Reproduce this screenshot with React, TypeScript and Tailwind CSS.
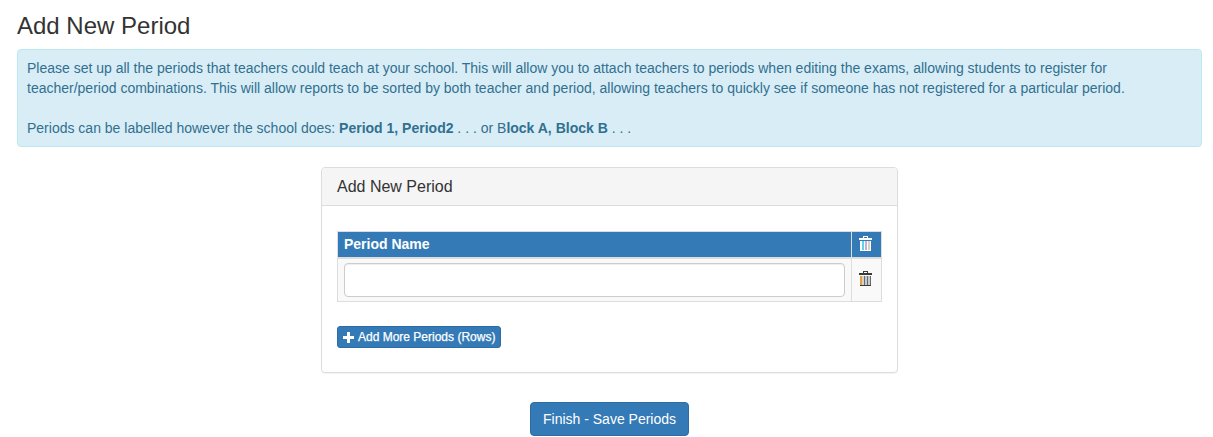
// Trash glyph on a 13x15 grid, bars tinted like the subpixel fringes in the reference
function TrashIcon({ tone }: { tone: 'light' | 'dark' }) {
  const ink = tone === 'light' ? '#ffffff' : '#3a3a3a';
  const bars =
    tone === 'light'
      ? [
          { x: 3, fill: '#5fd2ee' },
          { x: 6, fill: '#c2aee4' },
          { x: 9, fill: '#e2d0b6' },
        ]
      : [
          { x: 3, fill: '#e0d2b4' },
          { x: 6, fill: '#b4cde2' },
          { x: 9, fill: '#cdc8c0' },
        ];

  return (
    <svg viewBox="0 0 13 15" shapeRendering="crispEdges" className="h-[15px] w-[13px]" aria-hidden="true">
      <path fill={ink} d="M4 0h5v2h4v2H0V2h4zM5 1v1h3V1z" fillRule="evenodd" />
      <rect x="1" y="5" width="11" height="10" fill={tone === 'light' ? ink : '#6a6a6a'} />
      {tone === 'dark' && <rect x="1" y="14" width="11" height="1" fill={ink} />}
      {tone === 'dark' && <rect x="1" y="5" width="2" height="9" fill="#d9a050" />}
      {bars.map((bar) => (
        <rect key={bar.x} x={bar.x} y="5" width="2" height="9" fill={bar.fill} />
      ))}
    </svg>
  );
}

function PlusIcon() {
  return (
    <svg viewBox="0 0 11 11" className="h-[11px] w-[11px] shrink-0" fill="currentColor" aria-hidden="true">
      <path d="M4 0h3v4h4v3H7v4H4V7H0V4h4z" />
    </svg>
  );
}

export default function App() {
  return (
    <div className="min-h-[437px] overflow-hidden bg-white pl-[17px] pr-[11px] font-['Liberation_Sans',Arial,sans-serif] text-[14px] leading-[20px] text-[#333]">
      <h1 className="pt-[12px] text-[24px] leading-[27px] font-normal">Add New Period</h1>

      <div className="mt-[10px] h-[98px] rounded-[4px] border border-[#bce8f1] bg-[#d9edf7] pl-[9px] pr-[9px] pt-[8px] text-[#31708f]">
        <p>
          Please set up all the periods that teachers could teach at your school. This will allow you to attach teachers to periods when editing the exams, allowing students to register for
          <br />
          teacher/period combinations. This will allow reports to be sorted by both teacher and period, allowing teachers to quickly see if someone has not registered for a particular period.
        </p>
        <p className="mt-[20px]">
          Periods can be labelled however the school does: <b>Period 1, Period2</b> . . . or B<b>lock A, Block B</b> . . .
        </p>
      </div>

      <div className="ml-[304px] mt-[20px] h-[206px] w-[577px] rounded-[4px] border border-[#ddd] bg-white shadow-[0_1px_1px_rgba(0,0,0,0.05)]">
        <div className="flex h-[38px] items-center rounded-t-[3px] border-b border-[#ddd] bg-[#f5f5f5] pl-[15px] text-[16px] leading-[18px]">
          Add New Period
        </div>

        <div className="px-[15px] pt-[25px]">
          <table className="w-[545px] table-fixed border-collapse border border-[#ddd]">
            <thead>
              <tr className="h-[26px] bg-[#337ab7] text-white">
                <th className="px-[6px] pb-[1px] text-left text-[14px] font-bold">Period Name</th>
                <th className="w-[30px] border-l border-[#ddd]">
                  <div className="flex justify-center pb-[1px] pr-[2px]">
                    <TrashIcon tone="light" />
                  </div>
                </th>
              </tr>
            </thead>
            <tbody>
              <tr className="h-[44px] border-t-2 border-[#ddd] bg-[#f9f9f9]">
                <td className="px-[6px]">
                  <input
                    type="text"
                    className="block h-[34px] w-full rounded-[4px] border border-[#ccc] bg-white px-3 shadow-[inset_0_1px_1px_rgba(0,0,0,0.075)]"
                  />
                </td>
                <td className="w-[30px] border-l border-[#ddd]">
                  <div className="flex justify-center pb-[2px] pr-[2px]">
                    <TrashIcon tone="dark" />
                  </div>
                </td>
              </tr>
            </tbody>
          </table>

          <button
            type="button"
            className="mt-[24px] flex h-[22px] w-[164px] items-center gap-[4px] whitespace-nowrap rounded-[3px] border border-[#2e6da4] bg-[#337ab7] pl-[5px] text-[12px] font-normal leading-[18px] text-white [-webkit-text-stroke:0.25px_white]"
          >
            <PlusIcon />
            Add More Periods (Rows)
          </button>
        </div>
      </div>

      <div className="ml-[513px] mt-[29px]">
        <button
          type="button"
          className="h-[34px] w-[159px] rounded-[4px] border border-[#2e6da4] bg-[#337ab7] text-center text-[14px] text-white"
        >
          Finish - Save Periods
        </button>
      </div>
    </div>
  );
}
